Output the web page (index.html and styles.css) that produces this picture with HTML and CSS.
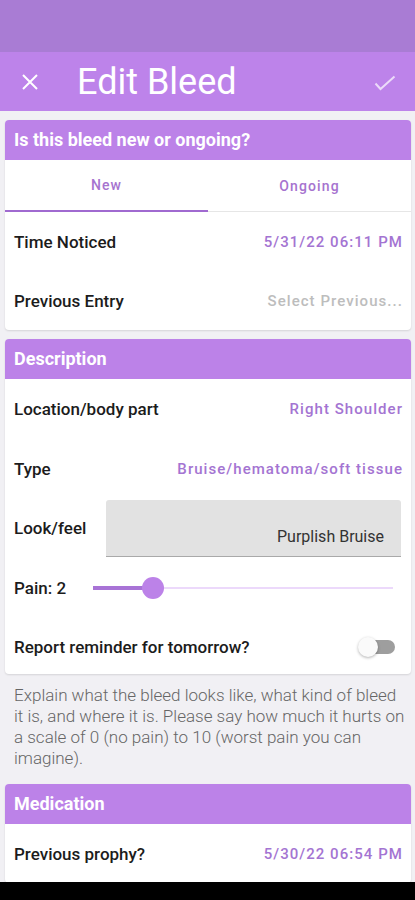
FILE: index.html
```html
<!DOCTYPE html>
<html lang="en">
<head>
    <meta charset="UTF-8">
    <meta name="viewport" content="width=device-width, initial-scale=1.0">
    <title>Edit Bleed</title>
    <link rel="stylesheet" href="styles.css">
</head>
<body>
    <div class="status-bar"></div>
    <div class="toolbar">
        <svg class="close-icon" width="18" height="18" viewBox="0 0 18 18">
            <path d="M2 2 L16 16 M16 2 L2 16" stroke="#fff" stroke-width="2" fill="none"/>
        </svg>
        <h1>Edit Bleed</h1>
        <svg class="check-icon" width="22" height="16" viewBox="0 0 22 16">
            <path d="M1.5 8.5 L6.5 14 L20.5 1.5" stroke="rgba(255,255,255,0.7)" stroke-width="2" fill="none"/>
        </svg>
    </div>

    <div class="content">
        <div class="card">
            <div class="card-header">Is this bleed new or ongoing?</div>
            <div class="tabs">
                <div class="tab active">New</div>
                <div class="tab">Ongoing</div>
            </div>
            <div class="row">
                <span class="label">Time Noticed</span>
                <span class="value">5/31/22 06:11 PM</span>
            </div>
            <div class="row">
                <span class="label">Previous Entry</span>
                <span class="value placeholder">Select Previous...</span>
            </div>
        </div>

        <div class="card">
            <div class="card-header">Description</div>
            <div class="row row-tall">
                <span class="label">Location/body part</span>
                <span class="value">Right Shoulder</span>
            </div>
            <div class="row row-tall">
                <span class="label">Type</span>
                <span class="value">Bruise/hematoma/soft tissue</span>
            </div>
            <div class="row look-row">
                <span class="label">Look/feel</span>
                <div class="look-box">Purplish Bruise</div>
            </div>
            <div class="row pain-row">
                <span class="label">Pain: 2</span>
                <div class="slider">
                    <div class="slider-active" style="width: 20%;"></div>
                    <div class="slider-thumb" style="left: 20%;"></div>
                </div>
            </div>
            <div class="row reminder-row">
                <span class="label">Report reminder for tomorrow?</span>
                <div class="switch">
                    <div class="switch-track"></div>
                    <div class="switch-thumb"></div>
                </div>
            </div>
        </div>

        <p class="hint">Explain what the bleed looks like, what kind of bleed it is, and where it is. Please say how much it hurts on a scale of 0 (no pain) to 10 (worst pain you can imagine).</p>

        <div class="card">
            <div class="card-header">Medication</div>
            <div class="row">
                <span class="label">Previous prophy?</span>
                <span class="value">5/30/22 06:54 PM</span>
            </div>
        </div>
    </div>
    <div class="nav-bar"></div>
</body>
</html>
```

FILE: styles.css
```css
body {
    margin: 0;
    width: 415px;
    height: 900px;
    overflow: hidden;
    font-family: Roboto, "Noto Sans", sans-serif;
    background-color: #f1f0f4;
    display: flex;
    flex-direction: column;
}

.status-bar {
    flex-shrink: 0;
    height: 52px;
    background-color: #a97cd4;
}

.toolbar {
    flex-shrink: 0;
    height: 59px;
    background-color: #bd83ea;
    display: flex;
    align-items: center;
    padding: 0 19px 0 21px;
}

.toolbar h1 {
    flex: 1;
    margin: 0 0 0 38px;
    font-size: 36px;
    font-weight: 400;
    color: #fff;
}

.check-icon {
    margin-top: 2px;
}

.content {
    flex: 1;
    min-height: 0;
    padding: 9px 4px 0 5px;
}

.card {
    background: white;
    border-radius: 4px;
    box-shadow: 0 1px 2px rgba(0, 0, 0, 0.12);
    overflow: hidden;
    margin-bottom: 9px;
}

.card:last-child {
    margin-bottom: 0;
}

.card-header {
    height: 40px;
    line-height: 40px;
    padding-left: 9px;
    background-color: #bc82e8;
    color: white;
    font-size: 18px;
    font-weight: 700;
}

.tabs {
    display: flex;
    height: 51px;
    border-bottom: 1px solid #e6e6e6;
}

.tab {
    flex: 1;
    display: flex;
    align-items: center;
    justify-content: center;
    font-size: 14px;
    font-weight: 500;
    letter-spacing: 0.08em;
    color: #a673cf;
}

.tab.active {
    border-bottom: 2px solid #a06ad0;
    margin-bottom: -1px;
}

.row {
    height: 59px;
    display: flex;
    align-items: center;
    justify-content: space-between;
    padding: 0 8px 0 9px;
}

.row-tall {
    height: 60px;
}

.label {
    font-size: 17px;
    font-weight: 500;
    color: #1c1c1c;
}

.value {
    font-size: 15px;
    font-weight: 500;
    letter-spacing: 0.07em;
    color: #a474d2;
}

.value.placeholder {
    color: #bdbdbd;
}

.look-row {
    height: 58px;
    padding-right: 10px;
}

.look-box {
    width: 295px;
    height: 57px;
    margin-left: auto;
    background-color: #e2e2e2;
    border-bottom: 1px solid #a9a9a9;
    border-radius: 3px 3px 0 0;
    display: flex;
    align-items: flex-end;
    justify-content: flex-end;
    padding: 0 17px 10px 0;
    box-sizing: border-box;
    font-size: 16px;
    color: #333;
}

.pain-row {
    height: 62px;
    padding-right: 18px;
}

.slider {
    position: relative;
    width: 300px;
    height: 2px;
    background-color: #ecd9fb;
}

.slider-active {
    height: 4px;
    margin-top: -1px;
    background-color: #a873d6;
}

.slider-thumb {
    position: absolute;
    top: -10px;
    width: 22px;
    height: 22px;
    margin-left: -11px;
    border-radius: 50%;
    background-color: #bc82e8;
}

.reminder-row {
    height: 55px;
    padding-right: 16px;
}

.switch {
    position: relative;
    width: 37px;
    height: 22px;
}

.switch-track {
    position: absolute;
    top: 4px;
    left: 2px;
    right: 0;
    height: 14px;
    border-radius: 7px;
    background-color: #9e9e9e;
}

.switch-thumb {
    position: absolute;
    top: 1px;
    left: 0;
    width: 20px;
    height: 20px;
    border-radius: 50%;
    background-color: #fafafa;
    box-shadow: 0 1px 3px rgba(0, 0, 0, 0.3);
}

.hint {
    margin: 0;
    padding: 2px 6px 15px 9px;
    font-size: 17px;
    font-weight: 300;
    line-height: 21px;
    color: #666;
}

.nav-bar {
    flex-shrink: 0;
    height: 18px;
    background-color: #000;
}
```
